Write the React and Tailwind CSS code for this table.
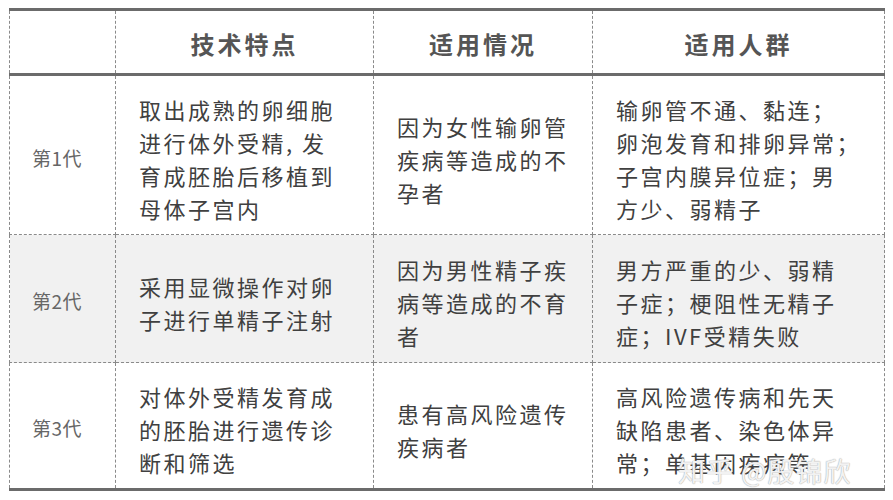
import React from 'react'

const rows = [
  {
    gen: '第1代',
    tech: ['取出成熟的卵细胞', '进行体外受精, 发', '育成胚胎后移植到', '母体子宫内'],
    cond: ['因为女性输卵管', '疾病等造成的不', '孕者'],
    people: ['输卵管不通、黏连；', '卵泡发育和排卵异常；', '子宫内膜异位症；男', '方少、弱精子'],
    bg: 'bg-white',
    h: 'h-[160px]',
  },
  {
    gen: '第2代',
    tech: ['采用显微操作对卵', '子进行单精子注射'],
    cond: ['因为男性精子疾', '病等造成的不育', '者'],
    people: ['男方严重的少、弱精', '子症；梗阻性无精子', '症；IVF受精失败'],
    bg: 'bg-[#f1f1f1]',
    h: 'h-[128px]',
  },
  {
    gen: '第3代',
    tech: ['对体外受精发育成', '的胚胎进行遗传诊', '断和筛选'],
    cond: ['患有高风险遗传', '疾病者'],
    people: ['高风险遗传病和先天', '缺陷患者、染色体异', '常；单基因疾病等'],
    bg: 'bg-white',
    h: 'h-[127px]',
  },
]

const Lines = ({ lines }) => (
  <div className='flex flex-col'>
    {lines.map((l, i) => (
      <span key={i} className='whitespace-nowrap'>{l}</span>
    ))}
  </div>
)

const App = () => {
  const cell = 'border border-dashed border-[#8a8a8a] align-middle'
  const thickTop = 'border-t-[3px] [border-top-style:solid] border-t-[#6b6b6b]'
  const thickBottom = 'border-b-[3px] [border-bottom-style:solid] border-b-[#6b6b6b]'
  const body = 'text-[22px] leading-[33px] tracking-[2.5px] text-[#404040] pl-[23px] pr-2 pt-[8px]'

  return (
    <div className='w-[893px] h-[500px] bg-white relative' style={{ fontFamily: '"Noto Sans CJK SC", "Noto Sans", sans-serif' }}>
      <table className='ml-[9px] mt-[8px] w-[875px] table-fixed border-collapse'>
        <colgroup>
          <col className='w-[106px]' />
          <col className='w-[258px]' />
          <col className='w-[219px]' />
          <col className='w-[292px]' />
        </colgroup>
        <thead>
          <tr>
            <th className={`${cell} ${thickTop} ${thickBottom} h-[65px]`}></th>
            {['技术特点', '适用情况', '适用人群'].map((t) => (
              <th
                key={t}
                className={`${cell} ${thickTop} ${thickBottom} h-[65px] text-center text-[24px] font-bold tracking-[3px] text-[#555] pt-[4px]`}
              >
                {t}
              </th>
            ))}
          </tr>
        </thead>
        <tbody>
          {rows.map((r, idx) => {
            const last = idx === 2 ? thickBottom : ''
            return (
              <tr key={r.gen} className={r.bg}>
                <td className={`${cell} ${r.h} ${last} pl-[22px] pt-[6px] text-[19px] tracking-[0.5px] text-[#666]`}>
                  {r.gen}
                </td>
                <td className={`${cell} ${r.h} ${last} ${body}`}>
                  <Lines lines={r.tech} />
                </td>
                <td className={`${cell} ${r.h} ${last} ${body} pl-[22px]`}>
                  <Lines lines={r.cond} />
                </td>
                <td className={`${cell} ${r.h} ${last} ${body}`}>
                  <Lines lines={r.people} />
                </td>
              </tr>
            )
          })}
        </tbody>
      </table>

      {/* watermark */}
      <div className='absolute left-[678px] top-[443px] text-[27px] tracking-[1px] text-white/85 [text-shadow:0_0_1px_#aaa,0_0_1px_#aaa] whitespace-nowrap'>
        知乎 @殷锦欣
      </div>
    </div>
  )
}

export default App
